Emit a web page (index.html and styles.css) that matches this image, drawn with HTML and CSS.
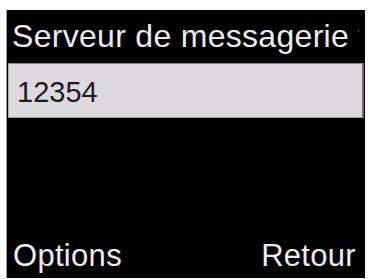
FILE: index.html
```
<!DOCTYPE html>
<html lang="fr">
<head>
<meta charset="utf-8">
<title>Serveur de messagerie vocale</title>
<link rel="stylesheet" href="styles.css">
</head>
<body>
<div class="screen">
  <div class="title">Serveur de messagerie vocale</div>
  <div class="field">12354</div>
  <div class="softkeys">
    <span class="key">Options</span>
    <span class="key">Retour</span>
  </div>
</div>
</body>
</html>
```
FILE: styles.css
```
html, body {
  margin: 0;
  padding: 0;
  background: #ffffff;
}
body {
  width: 368px;
  height: 279px;
  overflow: hidden;
  font-family: "Liberation Sans", Arial, sans-serif;
}
.screen {
  margin: 10px 0 0 6px;
  width: 359px;
  height: 268px;
  background: #000;
  border-left: 1px solid #9a9a9a;
  box-sizing: border-box;
  display: flex;
  flex-direction: column;
}
.title {
  height: 53px;
  box-sizing: border-box;
  margin-right: 6px;
  padding: 8px 0 0 5px;
  font-size: 32px;
  letter-spacing: 0.3px;
  color: #ececec;
  white-space: nowrap;
  overflow: hidden;
}
.field {
  margin: 0 1px 0 1px;
  height: 55px;
  box-sizing: border-box;
  background: #dcdadd;
  border-top: 1px solid #8a8a8a;
  border-left: 1px solid #b0b0b0;
  border-right: 2px solid #6a6a6a;
  border-bottom: 1px solid #9a9a9a;
  padding: 12px 0 0 8px;
  font-size: 29px;
  color: #1c1c1c;
}
.softkeys {
  margin-top: auto;
  display: flex;
  justify-content: space-between;
  padding: 0 9px 4px 6px;
  font-size: 31px;
  letter-spacing: 0.3px;
  color: #ececec;
}
```
